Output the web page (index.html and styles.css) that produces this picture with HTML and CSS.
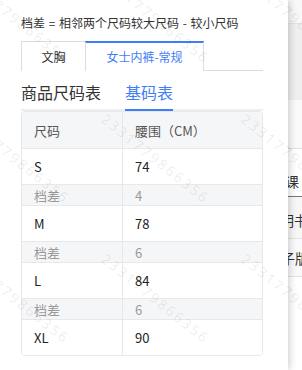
FILE: index.html
```html
<!DOCTYPE html>
<html lang="zh-CN">
<head>
<meta charset="utf-8">
<link rel="stylesheet" href="styles.css">
</head>
<body>
<div class="stage">
  <div class="strip">
    <div class="s-top"></div>
    <div class="s-grey"></div>
    <div class="s-white"></div>
    <div class="s-row s-row1"><span>课</span></div>
    <div class="s-row s-row2"><span>明书</span></div>
    <div class="s-row s-row3"><span>子版</span></div>
  </div>
  <div class="panel">
    <div class="note">档差 = 相邻两个尺码较大尺码 - 较小尺码</div>
    <div class="tabs">
      <div class="tab tab-first">文胸</div>
      <div class="tab tab-active">女士内裤-常规</div>
    </div>
    <div class="heads">
      <div class="head">商品尺码表</div>
      <div class="head head-active">基码表</div>
    </div>
    <div class="tbl">
      <div class="row row-h"><div class="c1">尺码</div><div class="c2">腰围（CM）</div></div>
      <div class="row row-d"><div class="c1">S</div><div class="c2">74</div></div>
      <div class="row row-g"><div class="c1">档差</div><div class="c2">4</div></div>
      <div class="row row-d"><div class="c1">M</div><div class="c2">78</div></div>
      <div class="row row-g"><div class="c1">档差</div><div class="c2">6</div></div>
      <div class="row row-d"><div class="c1">L</div><div class="c2">84</div></div>
      <div class="row row-g"><div class="c1">档差</div><div class="c2">6</div></div>
      <div class="row row-d"><div class="c1">XL</div><div class="c2">90</div></div>
    </div>
  </div>
  <div class="wm">
    <span class="wm-t wm-a">2331779866356</span>
    <span class="wm-t wm-b">2331779866356</span>
    <span class="wm-t wm-c">2331779866356</span>
    <span class="wm-t wm-d">2331779866356</span>
    <span class="wm-t wm-e">2331779866356</span>
    <span class="wm-t wm-f">2331779866356</span>
    <span class="wm-t wm-g">2331779866356</span>
    <span class="wm-t wm-h">2331779866356</span>
    <span class="wm-t wm-i">2331779866356</span>
  </div>
</div>
</body>
</html>
```
FILE: styles.css
```css
* { box-sizing: border-box; }
html, body { margin: 0; padding: 0; }
body {
  font-family: "Noto Sans CJK SC", "Noto Sans", sans-serif;
  color: #333;
  background: #fff;
}
.stage {
  position: relative;
  width: 302px;
  height: 370px;
  overflow: hidden;
  display: flex;
  flex-direction: row-reverse;
}
.panel {
  width: 288px;
  height: 370px;
  background: #fff;
  padding-left: 21px;
  box-shadow: 2px 0 7px rgba(0, 0, 0, 0.18);
  position: relative;
  z-index: 1;
}
.strip {
  width: 14px;
  height: 370px;
  background: #fff;
  overflow: hidden;
  display: flex;
  flex-direction: column;
}
.s-top { height: 24px; background: #f8f8f8; border-bottom: 1px solid #e2e2e2; }
.s-grey { height: 76px; background: #efefef; }
.s-white { height: 49px; background: #fafafa; border-bottom: 1px solid #e3e3e3; }
.s-row {
  white-space: nowrap;
  font-size: 14px;
  color: #333;
  display: flex;
  align-items: center;
}
.s-row1 { height: 48px; background: #fff; border-bottom: 1px solid #777; padding-top: 16px; margin-left: -3px; }
.s-row2 { height: 42px; background: #f7f7f7; border-bottom: 1px solid #e3e3e3; padding-top: 4px; margin-left: -8px; }
.s-row3 { height: 38px; background: #fafafa; border-bottom: 1px solid #e3e3e3; margin-left: -7px; }

.note {
  padding-top: 15px;
  font-size: 12px;
  line-height: 16px;
  color: #333;
  white-space: nowrap;
  word-spacing: 1px;
}
.tabs {
  margin-top: 10px;
  width: 242px;
  height: 30px;
  display: flex;
  border-bottom: 1px solid #dcdcdc;
}
.tab {
  height: 30px;
  border: 1px solid #dcdcdc;
  border-bottom: none;
  font-size: 12px;
  display: flex;
  align-items: center;
  justify-content: center;
  background: #fff;
  color: #333;
}
.tab-first { width: 65px; }
.tab-active {
  width: 119px;
  margin-left: -1px;
  border-top: 2px solid #3f7ef6;
  color: #3f7ef6;
  padding-bottom: 1px;
}
.heads {
  width: 242px;
  display: flex;
  gap: 24px;
  border-bottom: 2px solid #eceef1;
  padding-top: 10px;
}
.head {
  font-size: 16px;
  line-height: 22px;
  padding-bottom: 6px;
  color: #333;
}
.head-active {
  color: #3f7ef6;
  border-bottom: 2px solid #3f7ef6;
  margin-bottom: -2px;
}
.tbl {
  width: 242px;
  border: 1px solid #e8e8e8;
  border-radius: 4px;
  overflow: hidden;
  font-size: 13px;
}
.row {
  display: flex;
  border-top: 1px solid #e8e8e8;
}
.row-h { border-top: none; height: 36px; background: #f5f6f8; color: #555; }
.row-d { height: 36px; background: #fff; color: #222; }
.row-g { height: 21px; background: #f5f6f8; color: #9a9a9a; }
.c1, .c2 {
  display: flex;
  align-items: center;
  padding-left: 12px;
}
.c1 { width: 101px; border-right: 1px solid #e8e8e8; }
.c2 { flex: 1; }

.wm {
  position: absolute;
  left: 0;
  top: 0;
  width: 302px;
  height: 370px;
  pointer-events: none;
  z-index: 5;
}
.wm-t {
  position: absolute;
  font-family: "Noto Sans", sans-serif;
  font-size: 14px;
  letter-spacing: 2.3px;
  line-height: 14px;
  color: rgba(0, 0, 0, 0.085);
  transform: rotate(38.6deg);
  transform-origin: 0 50%;
  white-space: nowrap;
}
.wm-a { left: -37px; top: -30px; }
.wm-b { left: 103px; top: -30px; }
.wm-c { left: 243px; top: -30px; }
.wm-d { left: -37px; top: 110px; }
.wm-e { left: 103px; top: 110px; }
.wm-f { left: 243px; top: 110px; }
.wm-g { left: -37px; top: 250px; }
.wm-h { left: 103px; top: 250px; }
.wm-i { left: 243px; top: 250px; }
```
